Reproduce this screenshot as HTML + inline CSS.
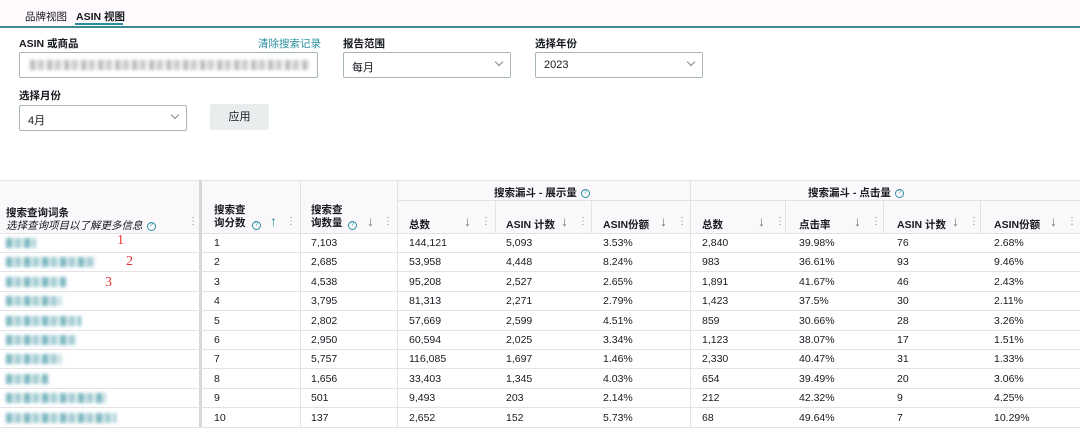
<!DOCTYPE html>
<html><head><meta charset="utf-8"><style>
*{margin:0;padding:0;box-sizing:border-box}
body{width:1080px;height:427px;overflow:hidden;background:#fff;font-family:"Liberation Sans","Noto Sans CJK SC",sans-serif;color:#16191f;font-size:11px;position:relative}
.a{position:absolute;white-space:nowrap}
.top{position:absolute;left:0;top:0;width:1080px;height:28px;background:#fdf9fd;border-bottom:2px solid #3c8a95}
.lbl{font-weight:bold;font-size:10.5px}
.sel{position:absolute;height:26px;border:1px solid #aab7b8;border-radius:2px;background:#fff;font-size:11px;padding:6px 8px}
.sel i{position:absolute;right:8px;top:6px;width:6px;height:6px;border-right:1px solid #888;border-bottom:1px solid #888;transform:rotate(45deg)}
.hd{position:absolute;background:#fbf8fb}
.vl{position:absolute;width:1px;background:#e4e2e4}
.hl{position:absolute;height:1px;background:#e4e2e4;left:0;width:1080px}
.th{position:absolute;font-weight:bold;font-size:10.5px}
.ic{display:inline-block;width:9px;height:9px;border:1px solid #2a8fa0;border-radius:50%;font-size:6px;line-height:7px;text-align:center;color:#2a8fa0;font-weight:normal;vertical-align:middle;margin-left:4px}
.ar{position:absolute;color:#777;font-size:14px}
.dt{position:absolute;color:#888;font-size:10px}
.c{position:absolute;font-size:10.5px}
.bl{position:absolute;height:10px;background:repeating-linear-gradient(90deg,#5fa8b3 0 6px,#cfe3e6 6px 9px,#8fc2ca 9px 15px,#e8f1f2 15px 18px);filter:blur(1.5px);opacity:.8}
.red{position:absolute;color:#e53935;font-size:14px;font-family:"Liberation Serif",serif}
</style></head><body>
<div class="top"></div>
<div class="a" style="left:25px;top:9px;font-size:10.5px">品牌视图</div>
<div class="a" style="left:76px;top:9px;font-size:10.5px;font-weight:bold">ASIN 视图</div>
<div class="a" style="left:75px;top:23px;width:48px;height:2px;background:#2a8fa0"></div>

<div class="a lbl" style="left:19px;top:36px">ASIN 或商品</div>
<div class="a" style="left:258px;top:36px;color:#2a8fa0;font-size:10.5px">清除搜索记录</div>
<div class="sel" style="left:19px;top:52px;width:299px"><div class="bl" style="left:10px;top:7px;width:280px;opacity:.5;background:repeating-linear-gradient(90deg,#777 0 5px,#ddd 5px 8px,#999 8px 14px,#fff 14px 17px)"></div></div>
<div class="a lbl" style="left:343px;top:36px">报告范围</div>
<div class="sel" style="left:343px;top:52px;width:168px">每月<i></i></div>
<div class="a lbl" style="left:535px;top:36px">选择年份</div>
<div class="sel" style="left:535px;top:52px;width:168px">2023<i></i></div>
<div class="a lbl" style="left:19px;top:88px">选择月份</div>
<div class="sel" style="left:19px;top:105px;width:168px">4月<i></i></div>
<div class="a" style="left:210px;top:104px;width:59px;height:26px;background:#eaeded;border-radius:2px;text-align:center;line-height:26px;font-size:11px">应用</div>

<div class="hd" style="left:0;top:180px;width:1080px;height:53px"></div>
<div class="hl" style="top:180px"></div>
<div class="hl" style="top:200px;left:397px;width:683px"></div>
<div class="hl" style="top:233px"></div>
<div class="a" style="left:199px;top:180px;width:3px;height:247px;background:#d8d6d8"></div>
<div class="vl" style="left:300px;top:180px;height:247px"></div>
<div class="vl" style="left:397px;top:180px;height:247px"></div>
<div class="vl" style="left:690px;top:180px;height:247px"></div>
<div class="vl" style="left:495px;top:200px;height:33px"></div>
<div class="vl" style="left:591px;top:200px;height:33px"></div>
<div class="vl" style="left:785px;top:200px;height:33px"></div>
<div class="vl" style="left:883px;top:200px;height:33px"></div>
<div class="vl" style="left:980px;top:200px;height:33px"></div>

<div class="th" style="left:6px;top:205px">搜索查询词条</div>
<div class="a" style="left:6px;top:218px;font-style:italic;font-size:10.5px">选择查询项目以了解更多信息<span class="ic">?</span></div>
<div class="dt" style="left:188px;top:216px">⋮</div>
<div class="th" style="left:214px;top:204px;line-height:13px">搜索查<br>询分数</div>
<div class="a" style="left:248px;top:219px"><span class="ic">?</span></div>
<div class="ar" style="left:270px;top:213px;color:#2a8fa0;font-weight:bold">↑</div>
<div class="dt" style="left:286px;top:216px">⋮</div>
<div class="th" style="left:311px;top:204px;line-height:13px">搜索查<br>询数量</div>
<div class="a" style="left:344px;top:219px"><span class="ic">?</span></div>
<div class="ar" style="left:367px;top:213px">↓</div><div class="dt" style="left:383px;top:216px">⋮</div>

<div class="th" style="left:494px;top:185px">搜索漏斗 - 展示量<span class="ic">?</span></div>
<div class="th" style="left:808px;top:185px">搜索漏斗 - 点击量<span class="ic">?</span></div>

<div class="th" style="left:409px;top:217px">总数</div><div class="ar" style="left:464px;top:213px">↓</div><div class="dt" style="left:481px;top:216px">⋮</div>
<div class="th" style="left:506px;top:217px">ASIN 计数</div><div class="ar" style="left:561px;top:213px">↓</div><div class="dt" style="left:578px;top:216px">⋮</div>
<div class="th" style="left:603px;top:217px">ASIN份额</div><div class="ar" style="left:660px;top:213px">↓</div><div class="dt" style="left:677px;top:216px">⋮</div>
<div class="th" style="left:702px;top:217px">总数</div><div class="ar" style="left:758px;top:213px">↓</div><div class="dt" style="left:775px;top:216px">⋮</div>
<div class="th" style="left:799px;top:217px">点击率</div><div class="ar" style="left:854px;top:213px">↓</div><div class="dt" style="left:871px;top:216px">⋮</div>
<div class="th" style="left:897px;top:217px">ASIN 计数</div><div class="ar" style="left:952px;top:213px">↓</div><div class="dt" style="left:969px;top:216px">⋮</div>
<div class="th" style="left:994px;top:217px">ASIN份额</div><div class="ar" style="left:1050px;top:213px">↓</div><div class="dt" style="left:1067px;top:216px">⋮</div>

<div id="rows"></div>
<div class="red" style="left:117px;top:233px">1</div>
<div class="red" style="left:126px;top:254px">2</div>
<div class="red" style="left:105px;top:275px">3</div>
<script>
var d=[[1,"7,103","144,121","5,093","3.53%","2,840","39.98%","76","2.68%",30],
[2,"2,685","53,958","4,448","8.24%","983","36.61%","93","9.46%",90],
[3,"4,538","95,208","2,527","2.65%","1,891","41.67%","46","2.43%",60],
[4,"3,795","81,313","2,271","2.79%","1,423","37.5%","30","2.11%",55],
[5,"2,802","57,669","2,599","4.51%","859","30.66%","28","3.26%",75],
[6,"2,950","60,594","2,025","3.34%","1,123","38.07%","17","1.51%",70],
[7,"5,757","116,085","1,697","1.46%","2,330","40.47%","31","1.33%",55],
[8,"1,656","33,403","1,345","4.03%","654","39.49%","20","3.06%",42],
[9,"501","9,493","203","2.14%","212","42.32%","9","4.25%",100],
[10,"137","2,652","152","5.73%","68","49.64%","7","10.29%",110]];
var xs=[214,311,409,506,603,702,799,897,994],h="";
d.forEach(function(r,i){var y=233+i*19.4;
 h+='<div class="hl" style="top:'+Math.round(y+19)+'px"></div>';
 h+='<div class="bl" style="left:6px;top:'+Math.round(y+5)+'px;width:'+r[9]+'px"></div>';
 for(var k=0;k<9;k++)h+='<div class="c" style="left:'+xs[k]+'px;top:'+Math.round(y+4)+'px">'+r[k]+'</div>';});
document.getElementById("rows").innerHTML=h;
</script>
</body></html>
